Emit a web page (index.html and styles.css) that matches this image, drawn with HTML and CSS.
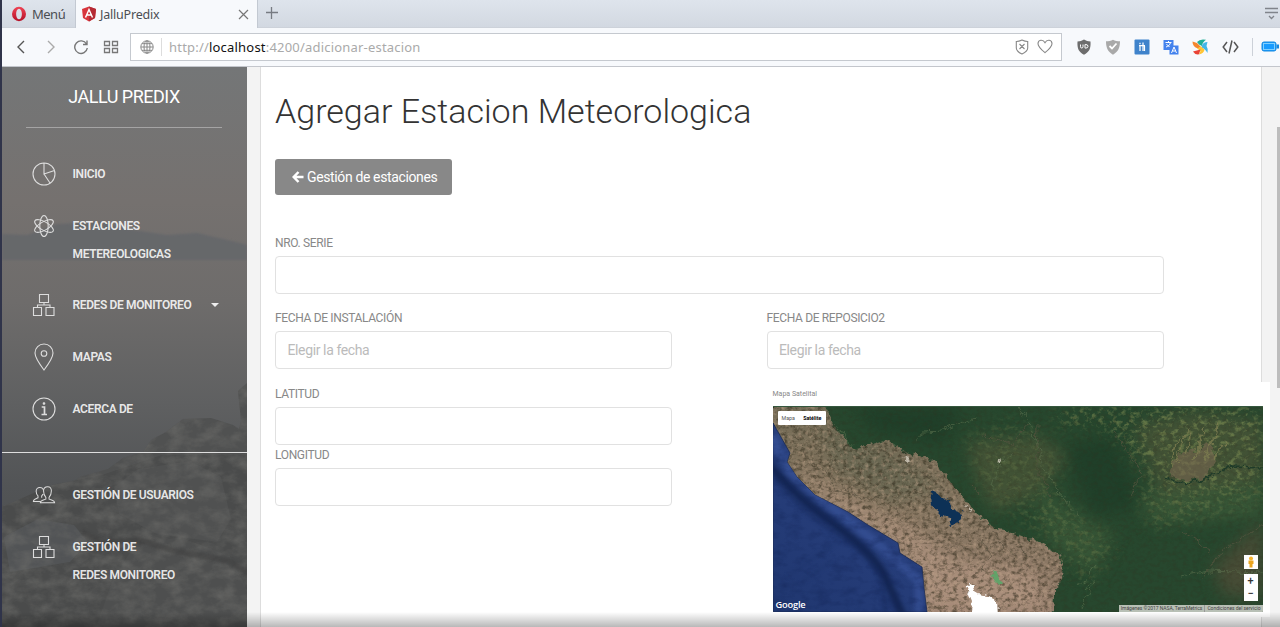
FILE: index.html
```html
<!DOCTYPE html>
<html lang="es">
<head>
<meta charset="utf-8">
<title>JalluPredix</title>
<link rel="stylesheet" href="styles.css">
</head>
<body>
<div class="window">
  <header class="chrome">
    <div class="tabs">
      <div class="opera-menu">
        <svg width="16" height="16" viewBox="0 0 16 16"><defs><linearGradient id="op" x2="0" y2="1"><stop stop-color="#ef4455"/><stop offset="1" stop-color="#b51128"/></linearGradient></defs><path fill="url(#op)" fill-rule="evenodd" d="M8 .8A7 7.2 0 1 1 8 15.200A7 7.200 0 1 1 8 .8ZM8 2.700C6.300 2.700 5.100 5 5.100 8S6.300 13.300 8 13.300S10.900 11 10.900 8S9.700 2.700 8 2.700Z"/></svg>
        <span>Menú</span>
      </div>
      <div class="tab">
        <svg width="16" height="16" viewBox="0 0 16 16"><path fill="#d8353c" d="M8 .5 15 3 14 12 8 15.500 2 12 1 3Z"/><path fill="#b52b35" d="M8 .5 15 3 14 12 8 15.500Z"/><path d="M4.500 11.500 8 3.500l3.500 8M6 9h4" fill="none" stroke="#fff" stroke-width="1.500"/></svg>
        <span class="tab-title">JalluPredix</span>
        <svg class="close" width="11" height="11" viewBox="0 0 11 11"><path d="M1 1l9 9M10 1l-9 9" stroke="#777" stroke-width="1.200"/></svg>
      </div>
      <svg class="plus" width="14" height="14" viewBox="0 0 14 14"><path d="M1 6.500h12M6.500 1v12" stroke="#777b82" stroke-width="1.300"/></svg>
      <svg class="tab-list" width="13" height="14" viewBox="0 0 13 14"><path d="M0 1.500h13M0 5.500h13M4 9l2.500 2.500L9 9" fill="none" stroke="#80848b" stroke-width="1.300"/></svg>
    </div>
    <div class="toolbar">
      <div class="nav">
        <svg width="16" height="16" viewBox="0 0 16 16"><path d="M11 2 5 8l6 6" fill="none" stroke="#555" stroke-width="1.400"/></svg>
        <svg width="16" height="16" viewBox="0 0 16 16"><path d="M5 2l6 6-6 6" fill="none" stroke="#aaa" stroke-width="1.400"/></svg>
        <svg width="16" height="16" viewBox="0 0 16 16"><path d="M13.500 5A6.300 6.300 0 1 0 14.300 9M14 1.500v4h-4" fill="none" stroke="#777" stroke-width="1.400"/></svg>
        <svg width="16" height="16" viewBox="0 0 16 16"><path d="M1.500 2.500h5v4h-5zM9.500 2.500h5v4h-5zM1.500 9.500h5v4h-5zM9.500 9.500h5v4h-5z" fill="none" stroke="#777" stroke-width="1.300"/></svg>
      </div>
      <div class="address">
        <svg width="14" height="14" viewBox="0 0 14 14"><g fill="none" stroke="#888"><circle cx="7" cy="7" r="6.200"/><ellipse cx="7" cy="7" rx="3" ry="6.200"/><path d="M1 7h12M2 3.700h10M2 10.300h10M7 1v12"/></g></svg>
        <span class="url">http://<b>localhost</b>:4200/adicionar-estacion</span>
        <svg width="14" height="16" viewBox="0 0 14 16"><path d="M7 1c2 1 4 1.500 5.700 1.500V9c0 3-2.500 4.500-5.700 6C3.800 13.500 1.300 12 1.300 9V2.500C3 2.500 5 2 7 1ZM4.500 5l5 5M9.500 5l-5 5" fill="none" stroke="#888" stroke-width="1.100"/></svg>
        <svg width="16" height="15" viewBox="0 0 16 15"><path d="M8 13.700C3 9.500 1 7.500 1 4.700 1 .7 6 0 8 3.700 10 0 15 .7 15 4.700 15 7.500 13 9.500 8 13.700Z" fill="none" stroke="#888" stroke-width="1.100"/></svg>
      </div>
      <div class="extensions">
        <svg width="16" height="16" viewBox="0 0 16 16"><path fill="#6d6d6d" d="M8 .5c2 1.300 4 2 6.500 2C15 10 13 13 8 15.700 3 13 1 10 1.500 2.500 4 2.500 6 1.800 8 .5Z"/><path d="M4.500 5.500v2.200q0 1.300 1.200 1.300T7 7.700V5.500M9 5.500v3.600h.8Q12 9 12 7.300T9.800 5.500Z" stroke="#fff" fill="none"/></svg>
        <svg width="16" height="16" viewBox="0 0 16 16"><path fill="#a9a9a9" d="M8 .8c2 1 4.500 1.500 7 1.500C15 9 13 13 8 15.700 3 13 1 9 1 2.300c2.500 0 5-.5 7-1.500Z"/><path d="M4.500 7 7 9.500 11.500 4.500" stroke="#fff" stroke-width="1.800" fill="none"/></svg>
        <svg width="16" height="16" viewBox="0 0 16 16"><rect x=".5" y=".5" width="15" height="15" rx="1" fill="#3f83cb"/><path d="M6 6.500V12M6 3.800v1.400M9 3.500v8.500M10.500 12V7M5 6.700h6" stroke="#fff" stroke-width="1.200" fill="none"/></svg>
        <svg width="16" height="16" viewBox="0 0 16 16"><path fill="#4382ed" d="M.5 1h10v10h-10zM6.500 6.500h9v9h-9z"/><path d="M2.500 3.500h6M5.500 2v1.500M7.500 3.500C7 6 5 7.500 3 8M3.500 5q1 2 3 2.500M8.500 14l2.500-6 2.500 6M9.500 12h3" stroke="#fff" fill="none"/></svg>
        <svg width="17" height="16" viewBox="0 0 17 16"><path fill="#1fae98" d="M5 3Q8-.5 14 .8 10.500 3 10 7L7 5.500Z"/><path fill="#43b6e7" d="M10 6.500Q11 3 15.500 3L14.500 7q2 3 1 7Q13 9.500 9.500 8.500Z"/><path fill="#f4862e" d="M.5 2.500 5 4l4 4-3 1.500Q.5 8 .5 2.500Z"/><path fill="#ffc636" d="M5 9.500 9 7.500l3.500 3Q12 14.500 7 15.500L8.500 12Z"/><path fill="#e94335" d="M1 12.500 8.500 10.500 7 15.300Q3 16 1 12.500Z"/></svg>
        <svg width="17" height="16" viewBox="0 0 17 16"><path d="M5 3 1.200 8 5 13M12 3l3.800 5L12 13M10 1.500 7 14.500" stroke="#555" stroke-width="1.500" fill="none"/></svg>
      </div>
      <div class="battery"><svg width="18" height="12" viewBox="0 0 18 12"><rect x="1" y="1" width="14" height="9" rx="2" fill="#199cff" stroke="#1689df"/><rect x="2.500" y="2.500" width="11" height="6" fill="none" stroke="#80d0ff"/><path fill="#1689df" d="M15.500 3.500H18v4h-2.500z"/></svg></div>
    </div>
  </header>

  <div class="app">
    <aside class="sidebar">
      <svg class="scenery" width="245" height="560" viewBox="0 0 245 560" preserveAspectRatio="none">
        <defs>
          <linearGradient id="sky" x2="0" y2="1"><stop stop-color="#747677"/><stop offset=".24" stop-color="#75716f"/><stop offset=".42" stop-color="#6e6c6b"/><stop offset=".6" stop-color="#5f6061"/><stop offset=".75" stop-color="#525456"/><stop offset="1" stop-color="#484949"/></linearGradient>
          <filter id="rock" x="0" y="0" width="1" height="1" color-interpolation-filters="sRGB"><feTurbulence type="fractalNoise" baseFrequency=".06 .09" numOctaves="5" seed="8"/><feColorMatrix values="0 0 0 0 .42 0 0 0 0 .42 0 0 0 0 .41 1.300 0 0 0 -.45"/><feComposite in2="SourceGraphic" operator="in"/><feMerge><feMergeNode in="SourceGraphic"/><feMergeNode/></feMerge></filter>
          <filter id="soft"><feGaussianBlur stdDeviation="1"/></filter>
        </defs>
        <path fill="url(#sky)" d="M0 0h245v560H0z"/>
        <path fill="#66686b" filter="url(#soft)" d="M0 167 25 168 55 157 100 155 125 162 165 168 195 166 230 174 245 178V193H0Z"/>
        <g filter="url(#rock)" fill="#474848">
          <path fill="#505151" d="M245 316l-9 8 3 30-2 8-6-4-22-7-28 1-17 13-15 8-8 12-20 6-15 11-28 8-21 14-27 7-30 8v125h245Z"/>
          <path fill="#4a4b4b" d="M0 440l50-22 50-10 60-20 85 0v172H0Z"/>
          <path fill="#505151" d="M112 420l24-18 52-8 31 16 10 42-14 23-60-8-38-20Z"/>
          <path fill="#4e4f4f" d="M132 479l45-9 51 19 17 34v37H94l17-48Z"/>
          <path fill="#525456" d="M2 470l34-18 36 6 14 17-18 20-60 10Z"/>
        </g>
        <path d="M80 465l20 10 37-2 36 11 54 10 18 12" fill="none" stroke="#3d3e3e" stroke-width="6" opacity=".5" filter="url(#soft)"/>
      </svg>
      <div class="brand">JALLU PREDIX</div>
      <nav class="menu">
        <a class="item"><svg class="ico" width="24" height="24" viewBox="0 0 24 24"><path d="M12 1a11 11 0 1 0 0 22A11 11 0 0 0 12 1ZM12 1v11l10.500-3.500M12 12l6 9"/></svg><span>INICIO</span></a>
        <a class="item"><svg class="ico" width="24" height="24" viewBox="0 0 24 24"><ellipse cx="12" cy="12" rx="4.200" ry="10.500"/><ellipse cx="12" cy="12" rx="4.200" ry="10.500" transform="rotate(60 12 12)"/><ellipse cx="12" cy="12" rx="4.200" ry="10.500" transform="rotate(-60 12 12)"/></svg><span>ESTACIONES<br>METEREOLOGICAS</span></a>
        <a class="item"><svg class="ico" width="24" height="24" viewBox="0 0 24 24"><path d="M7.500 1.500h9v8h-9zM1.500 14.500h8v8h-8zM14 14.500h8v8h-8zM12 9.500v2.500M5.500 14.500V12h12.500v2.500"/></svg><span>REDES DE MONITOREO</span><i class="caret"></i></a>
        <a class="item"><svg class="ico" width="24" height="28" viewBox="0 0 24 28"><path d="M12 27Q3 15 3 10a9 9 0 0 1 18 0Q21 15 12 27Z"/><circle cx="12" cy="10.500" r="2.800"/></svg><span>MAPAS</span></a>
        <a class="item"><svg class="ico" width="24" height="24" viewBox="0 0 24 24"><circle cx="12" cy="12" r="11"/><path d="M9.700 10h2.800v7M9.500 17.500h5.500" stroke-width="1.700"/><circle cx="12" cy="6.500" r=".8" fill="#fff"/></svg><span>ACERCA DE</span></a>
      </nav>
      <nav class="menu admin">
        <a class="item"><svg class="ico" width="26" height="24" viewBox="0 0 26 24"><path d="M9 20.500h15.500c0-3-4-3-6-4v-2c2-2 2.500-4 2.500-7 0-3-1.500-4.500-4-4.500s-4.500 1.500-4.500 4.500c0 3 1 5.500 2.500 7v2c-2 1-6 1-6 4ZM9 19H1.500c0-3 3.500-3 5-4v-2C5 11.500 4.500 10 4.500 8 4.500 5.500 6 4 8.500 4c1.500 0 3 .7 3.300 2M10.500 15v-2l1.500-2"/></svg><span>GESTIÓN DE USUARIOS</span></a>
        <a class="item"><svg class="ico" width="24" height="24" viewBox="0 0 24 24"><path d="M7.500 1.500h9v8h-9zM1.500 14.500h8v8h-8zM14 14.500h8v8h-8zM12 9.500v2.500M5.500 14.500V12h12.500v2.500"/></svg><span>GESTIÓN DE<br>REDES MONITOREO</span></a>
      </nav>
    </aside>

    <main class="content">
      <section class="card">
        <h1>Agregar Estacion Meteorologica</h1>
        <a class="button"><svg width="12" height="12" viewBox="0 0 12 12"><path d="M6.500 1 1.700 6l4.800 5M2 6h9.500" fill="none" stroke="#fff" stroke-width="2.500"/></svg>Gestión de estaciones</a>
        <form class="form">
          <div class="field wide"><label for="serie">NRO. SERIE</label><input id="serie"></div>
          <div class="field"><label for="inst">FECHA DE INSTALACIÓN</label><input id="inst" placeholder="Elegir la fecha"></div>
          <div class="field"><label for="rep">FECHA DE REPOSICIO2</label><input id="rep" placeholder="Elegir la fecha"></div>
          <div class="coords">
            <div class="field"><label for="lat">LATITUD</label><input id="lat"></div>
            <div class="field"><label for="lon">LONGITUD</label><input id="lon"></div>
          </div>
          <div class="map-panel">
            <div class="map-title">Mapa Satelital</div>
            <div class="map">
              <svg class="terrain" width="490" height="206" viewBox="0 0 490 206" color-interpolation-filters="sRGB">
                <defs>
                  <clipPath id="landclip"><path d="M0 0H50L64 24 80 44 102 37 115 34 135 47 159 54 179 77 199 104 225 124 252 130 267 137 290 151 289 174 280 187 279 206H154L149 161 127 147 125 137 95 119 75 106 42 89 24 71 14 56 17 47 0 17Z"/></clipPath>
                  <linearGradient id="sea" x1=".7" y1="0" x2=".1" y2="1"><stop stop-color="#364f91"/><stop offset=".5" stop-color="#263d79"/><stop offset="1" stop-color="#203770"/></linearGradient>
                  <linearGradient id="andes" x1=".6" y1="0" x2=".4" y2="1"><stop stop-color="#6c6852"/><stop offset=".5" stop-color="#857560"/><stop offset="1" stop-color="#9a8070"/></linearGradient>
                  <filter id="grain" x="0" y="0" width="100%" height="100%"><feTurbulence type="fractalNoise" baseFrequency=".2 .26" numOctaves="5" seed="4"/><feColorMatrix values="0 0 0 0 .2 0 0 0 0 .18 0 0 0 0 .12 3 0 0 0 -1.350"/></filter>
                  <filter id="light" x="0" y="0" width="100%" height="100%"><feTurbulence type="fractalNoise" baseFrequency=".24" numOctaves="5" seed="17"/><feColorMatrix values="0 0 0 0 .76 0 0 0 0 .65 0 0 0 0 .55 2.500 0 0 0 -1.200"/></filter>
                  <filter id="fields" x="0" y="0" width="100%" height="100%"><feTurbulence type="fractalNoise" baseFrequency=".16 .2" numOctaves="5" seed="31"/><feColorMatrix values="0 0 0 0 .43 0 0 0 0 .5 0 0 0 0 .3 4 0 0 0 -1.950"/></filter>
                  <filter id="seabed" x="0" y="0" width="100%" height="100%"><feTurbulence type="fractalNoise" baseFrequency=".07 .12" numOctaves="4" seed="3"/><feColorMatrix values="0 0 0 0 .08 0 0 0 0 .15 0 0 0 0 .35 2 0 0 0 -.9"/></filter>
                  <filter id="rough" x="-10%" y="-10%" width="120%" height="120%"><feTurbulence type="fractalNoise" baseFrequency=".12" numOctaves="4" seed="6"/><feDisplacementMap in="SourceGraphic" scale="11" xChannelSelector="R" yChannelSelector="G"/></filter>
                  <filter id="b2"><feGaussianBlur stdDeviation="2"/></filter>
                  <filter id="b8" x="-30%" y="-30%" width="160%" height="160%"><feGaussianBlur stdDeviation="8"/></filter>
                  <mask id="farm"><g fill="#fff" filter="url(#b8)"><path d="M290 0H490V75L400 95 370 60 330 20 280 20Z"/><path d="M190 30l55-20 50 50-40 60-45-35Z" opacity=".4"/><path d="M270 80l80 62-40 40-30-45-30-20Z" opacity=".5"/><path d="M360 80l130-15v30l-110 30Z" opacity=".6"/></g></mask>
                </defs>
                <path fill="#27472e" d="M0 0h490v206H0z"/>
                <g filter="url(#b8)"><path fill="#4b5638" opacity=".75" d="M195 35l70-5 30 20-30 40-45 15-20-40ZM360 20l60-15 70 10v60l-100 20Z"/><path fill="#3b5938" opacity=".8" d="M260 80l80 50-20 40-45-35ZM360 90l130-15v35l-110 8Z"/><path fill="#4a4c36" opacity=".9" d="M490 115l-50 45 10 30h40Z"/><path fill="#203f29" d="M290 40l50-10 30 70-50 10ZM80 0h110l-20 40-70-15Z"/></g>
                <g mask="url(#farm)"><rect width="490" height="206" filter="url(#fields)" opacity=".8"/></g>
                <rect width="490" height="206" filter="url(#grain)" opacity=".22"/>
                <g filter="url(#rough)">
                  <path fill="#766650" opacity=".6" d="M395 68l5-12 8-8 12-2 10-8 10 4 3 15-12 15-17 4Z"/>
                  <path fill="none" stroke="#7d7d50" stroke-width="1.500" opacity=".8" d="M398 60l4-18 4-9M405 55l5-22 5-10M413 50l5-25M422 52l6-22 2-12M432 52l10-20 4-14M440 55l12-20"/>
                  <path fill="none" stroke="#1f3b29" stroke-width="1.500" d="M392 70l20 10 22-8 24-12 32 1"/>
                  <path fill="none" stroke="#607450" stroke-width=".8" opacity=".7" d="M144 35l4-9 22-1 17-8 15-4M64 20l8 12 9 10M220 82l5-24 15-10M310 200l10-25-10 8M307 180l15-21M410 170l24-5 56 2M245 0l15 25 12 40 34 48"/>
                  <path fill="none" stroke="#4c513b" d="M265 20l-2 40 15 30M210 30l30 10 15-22M198 78l9 10M490 118l-45 31-18 25M340 25l28 39-9 27M410 125l17 10 10 12"/>
                </g>
                <g filter="url(#rough)"><path fill="url(#andes)" d="M0-5H50L64 24 80 44 102 37 115 34 135 47 159 54 179 77 199 104 225 124 252 130 267 137 290 151 289 174 280 187 279 210H0Z"/></g>
                <g clip-path="url(#landclip)">
                  <path fill="#b09480" opacity=".75" filter="url(#b8)" d="M17 55l50 35 65 30 50 35 80 10 10 41H154L130 140 60 105Z"/>
                  <path fill="#5d614c" opacity=".6" filter="url(#b8)" d="M50 20l60 22 60 40-50 15-60-35Z"/>
                  <rect width="490" height="206" filter="url(#grain)" opacity=".6"/><rect width="490" height="206" filter="url(#light)" opacity=".5"/>
                  <g filter="url(#rough)" fill="none" stroke="#514b3b" opacity=".6"><path d="M22 28l12 25 18 12 13 20 18 5M72 82l16 10 25 1M120 97l14 18M210 130l9 20-10 15M220 125l13 20M241 130l12 20"/></g>
                </g>
                <path fill="#0d3156" filter="url(#rough)" d="M157 86l5 2 5 1 11 6 2 8 9 6-3 7-7 3-2-7-11-4-8-9Z"/>
                <path fill="url(#sea)" stroke="#1c2b52" stroke-width=".8" d="M0 17 17 47 14 56 24 71 42 89 75 106 95 119 125 137 127 147 149 161 151 182 154 206H0Z"/>
                <clipPath id="seaclip"><path d="M0 17 17 47 14 56 24 71 42 89 75 106 95 119 125 137 127 147 149 161 151 182 154 206H0Z"/></clipPath>
                <g clip-path="url(#seaclip)"><path d="M-5 57Q20 88 57 115T110 166L130 210" fill="none" stroke="#142653" stroke-width="8" filter="url(#b2)"/><path d="M0 68Q25 105 70 132T112 206" fill="none" stroke="#142757" stroke-width="3" filter="url(#b2)" opacity=".6"/><path d="M-2 30L17 65 60 102 105 138 146 175V206" fill="none" stroke="#3c579e" stroke-width="9" opacity=".6" filter="url(#b2)"/><path d="M15 170l50-35M28 176l31-21" stroke="#182e61" filter="url(#b2)"/><rect width="160" height="206" filter="url(#seabed)" opacity=".5"/></g>
                <g filter="url(#rough)"><path fill="#fff" d="M192 180l9-2 4 10 11 2 8 5 1 15H196l2-15Z"/><path fill="#63a269" d="M219 164l6 4 3 8-4 4-6-8Z"/><path fill="#e5ded1" opacity=".7" d="M130 50l9 3-2 3ZM223 57l7-6-2 5ZM190 99l7 7-2 1Z"/></g>
                <path stroke="#35573e" d="M0 .5h490"/>
              </svg>
              <div class="map-type"><span>Mapa</span><b>Satélite</b></div>
              <div class="google">Google</div>
              <div class="pegman"><svg width="8" height="12" viewBox="0 0 8 12"><circle cx="4" cy="2.500" r="2" fill="#f5b32e"/><path fill="#eba51f" d="M1.500 4.500h5v3.500H5.500V11.500h-3V8h-1Z"/></svg></div>
              <div class="zoom"><span>+</span><span>−</span></div>
              <div class="credits"><span>Imágenes ©2017 NASA, TerraMetrics</span><span>Condiciones del servicio</span></div>
            </div>
          </div>
        </form>
      </section>
      <div class="scroll"></div>
    </main>
  </div>
  <div class="shade"></div>
</div>
</body>
</html>
```
FILE: styles.css
```css
* { box-sizing: border-box; }
body { margin: 0; font-family: Roboto, sans-serif; overflow: hidden; }
svg { display: block; flex: none; }
.window { position: relative; width: 1280px; height: 627px; overflow: hidden; border-left: 2px solid #30344a; background: #f3f3f3; }
.chrome { height: 67px; background: #f7f9fc; border-bottom: 1px solid #c3c6cc; font-family: "Noto Sans", sans-serif; }
.tabs { height: 28px; display: flex; align-items: center; background: linear-gradient(#dee4ec, #d2d8e1); font-size: 13px; color: #4b4e53; box-shadow: inset 0 -1px #cdd2da; }
.opera-menu { width: 74px; height: 28px; padding: 0 0 0 9px; display: flex; align-items: center; gap: 5px; border-right: 1px solid #c3c9d2; }
.opera-menu span { letter-spacing: -.5px; }
.tab { width: 182px; height: 28px; display: flex; align-items: center; background: #f7f9fc; border-right: 1px solid #c3c9d2; padding: 0 8px 0 5px; gap: 3px; }
.tab-title { flex: 1; font-size: 12.5px; letter-spacing: -.2px; }
.plus { margin: -2px 0 0 7px; }
.tab-list { margin: 0 2px 0 auto; }
.toolbar { height: 37px; display: flex; align-items: center; }
.nav { width: 128px; padding-left: 11px; display: flex; gap: 14px; }
.address { width: 932px; height: 28px; background: #fff; border: 1px solid #c5c9cf; display: flex; align-items: center; padding: 0 8px 0 9px; gap: 8px; }
.url { flex: 1; margin-left: -1px; padding-left: 7px; border-left: 1px solid #ddd; line-height: 18px; font-size: 13px; letter-spacing: .2px; color: #aaa; }
.url b { color: #111; font-weight: 400; }
.extensions { display: flex; gap: 13px; margin-left: 14px; }
.battery { margin-left: 13px; height: 18px; padding: 3px 0 0 8px; border-left: 1px solid #ccd1d8; }
.app { display: flex; height: 560px; }
.sidebar { width: 245px; position: relative; color: rgba(255,255,255,.87); flex: none; }
.scenery { position: absolute; inset: 0; }
.brand { position: relative; margin: 0 25px 0 24px; height: 61px; padding-top: 15px; line-height: 30px; text-align: center; font-size: 18px; letter-spacing: -.5px; color: #fff; border-bottom: 1px solid rgba(255,255,255,.35); }
.menu { position: relative; padding-top: 20px; height: 324px; }
.admin { border-top: 1px solid #dedede; padding-top: 16.5px; height: 175px; }
.item { display: flex; align-items: flex-start; padding: 11.9px 0 11.9px 30px; line-height: 28px; font-size: 12px; font-weight: 600; letter-spacing: -.37px; }
.item span { margin-left: .5px; }
.ico { width: 24px; height: 28px; margin-right: 16px; fill: none; stroke: #ddd; stroke-width: 1.1; }
.caret { border: 4px solid transparent; border-top-color: #eee; border-bottom: 0; margin: 12px 0 0 20px; }
.content { flex: 1; display: flex; justify-content: space-between; padding-left: 13px; }
.card { width: 1002px; height: 560px; padding: 23px 14px 0; background: #fff; border: 1px solid #ddd; border-width: 0 1px; }
h1 { margin: 0; font-weight: 300; font-size: 34px; line-height: 43px; color: #333; white-space: nowrap; }
.button { display: inline-flex; align-items: center; width: 177px; height: 36px; margin-top: 26px; padding-left: 17px; gap: 3px; border-radius: 3px; background: #888; color: #fff; font-size: 14px; letter-spacing: -.37px; }
.form { margin-top: 39px; display: grid; grid-template-columns: 397px 397px; column-gap: 94.5px; row-gap: 15px; }
.wide { grid-column: 1 / 3; }
.field label { display: block; height: 18px; padding-top: 1px; line-height: 17px; margin-bottom: 4px; font-size: 12px; letter-spacing: -.35px; color: #888; }
.field input { display: block; width: 100%; height: 38px; border: 1px solid #e1e1e1; border-radius: 4px; padding: 0 11.5px; font: 14px Roboto, sans-serif; letter-spacing: -.38px; outline: 0; background: #fff; }
.field input::placeholder { color: #bbb; }
.coords { padding-top: .5px; display: flex; flex-direction: column; gap: 1px; }
.map-panel { position: relative; margin: -2px 0 0 -5px; width: 508px; height: 235px; background: #fff; padding: 7px 0 0 11px; }
.map-title { height: 17px; line-height: 11px; font-size: 7px; color: #888; }
.map { position: relative; width: 490px; height: 206px; overflow: hidden; border-radius: 1px; }
.map-type { position: absolute; left: 5px; top: 5px; width: 48px; height: 14px; background: #fff; border-radius: 1px; display: flex; justify-content: space-around; align-items: center; font-size: 5.3px; color: #555; }
.map-type b { color: #000; }
.google { position: absolute; left: 3px; bottom: 1px; font: 600 9.3px/12px "Open Sans", sans-serif; letter-spacing: -.2px; color: #fff; }
.pegman, .zoom { position: absolute; right: 5px; width: 14px; background: #fff; display: flex; align-items: center; }
.pegman { top: 149px; height: 14px; justify-content: center; }
.zoom { top: 168px; height: 27px; flex-direction: column; justify-content: space-around; font-size: 11px; line-height: 12px; color: #333; font-weight: 500; }
.credits { position: absolute; right: 0; bottom: 0; height: 7px; display: flex; align-items: center; background: rgba(225,227,221,.78); font-size: 5px; line-height: 7px; letter-spacing: -.04px; color: #444; white-space: nowrap; }
.credits span { padding: 0 2px; }
.credits span + span { border-left: 1px solid #999; }
.scroll { width: 3px; height: 261px; margin-top: 60px; background: #bdbdbd; }
.shade { position: absolute; left: 0; right: 0; bottom: 0; height: 15px; background: linear-gradient(rgba(0,0,0,0), rgba(0,0,0,.28)); }
```
